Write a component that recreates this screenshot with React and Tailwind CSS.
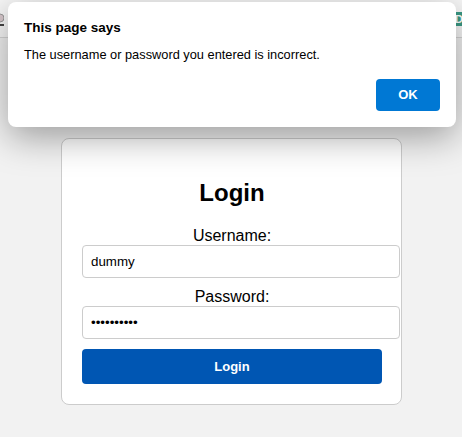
import React from 'react';

function AlertDialog() {
  return (
    <div className="absolute left-2 top-[2px] w-[448px] h-[125px] rounded-lg bg-white shadow-[0_10px_36px_rgba(0,0,0,0.36)] px-4 pt-[18px] pb-4 flex flex-col">
      <h3 className="text-[13.5px] leading-4 font-bold text-black">This page says</h3>
      <p className="mt-[11px] text-[12.8px] leading-4 text-black">The username or password you entered is incorrect.</p>
      <div className="mt-auto flex justify-end">
        <button className="w-16 h-8 rounded bg-[#0078d4] text-white text-[13px] font-bold">OK</button>
      </div>
    </div>
  );
}

export default function App() {
  return (
    <div className="relative h-[437px] overflow-hidden bg-[#f2f2f2] font-['Liberation_Sans',Arial,sans-serif]">
      {/* browser toolbar behind the dialog */}
      <div className="h-[38px] bg-[#f7f7f7] border-b border-[#d6d6d6] flex items-center justify-between">
        <svg width="8" height="16" viewBox="0 0 8 16" className="-ml-1">
          <circle cx="4" cy="7" r="4" fill="#d8c8cc" stroke="#999" strokeWidth="1" />
          <rect x="0" y="13" width="8" height="2" fill="#444" />
        </svg>
        <div className="w-[8px] h-[14px] bg-[#3a9a85] text-white text-[11px] leading-[14px] font-bold pl-[1px]">D</div>
      </div>

      <div className="flex justify-center pt-[100px] pl-px">
        <div className="w-[341px] bg-white border border-[#cccccc] rounded-lg pl-5 pr-[19px] py-5 text-center">
          <h2 className="mt-5 mb-5 text-2xl leading-7 font-bold text-black">Login</h2>
          <form onSubmit={(e) => e.preventDefault()}>
            <label className="block text-base leading-[18px] text-black">Username:</label>
            <input
              type="text"
              defaultValue="dummy"
              className="block w-[318px] h-[33px] px-2 border border-[#cccccc] rounded bg-white text-[13.33px] text-black outline-none"
            />
            <label className="block mt-[10px] text-base leading-[18px] text-black">Password:</label>
            <input
              type="password"
              defaultValue="dummypass1"
              className="block w-[318px] h-[33px] px-2 border border-[#cccccc] rounded bg-white text-[13.33px] text-black outline-none"
            />
            <button
              type="submit"
              className="mt-[10px] w-[300px] h-[35px] rounded bg-[#0056b3] text-white text-[13px] font-bold"
            >
              Login
            </button>
          </form>
        </div>
      </div>

      <AlertDialog />
    </div>
  );
}
